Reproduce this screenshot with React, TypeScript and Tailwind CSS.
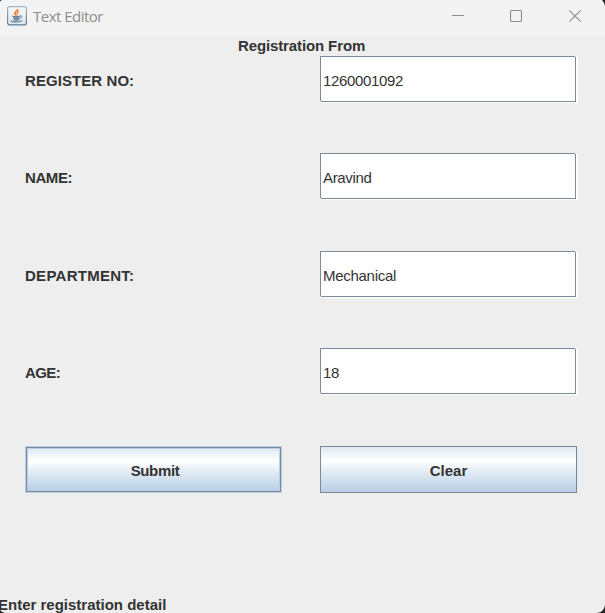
import React from "react";

type Field = { label: string; value: string; labelClass: string; valueClass: string };

const fields: Field[] = [
  { label: "REGISTER NO:", value: "1260001092", labelClass: "tracking-[0.07px]", valueClass: "pl-[2px] tracking-[-0.34px]" },
  { label: "NAME:", value: "Aravind", labelClass: "tracking-[-0.4px]", valueClass: "pl-[2px] tracking-[-0.34px]" },
  { label: "DEPARTMENT:", value: "Mechanical", labelClass: "tracking-[0.27px]", valueClass: "pl-[2px] tracking-[-0.28px]" },
  { label: "AGE:", value: "18", labelClass: "tracking-[-0.6px]", valueClass: "pl-[2px] tracking-[-0.34px]" },
];

function JavaIcon() {
  return (
    <svg width="20" height="20" viewBox="0 0 20 20" fill="none">
      <defs>
        <linearGradient id="frame" x1="0" y1="0" x2="0" y2="1">
          <stop offset="0" stopColor="#a3b4c2" />
          <stop offset="1" stopColor="#587a98" />
        </linearGradient>
        <linearGradient id="face" x1="0" y1="0" x2="0" y2="1">
          <stop offset="0" stopColor="#fafafa" />
          <stop offset="1" stopColor="#e0e4e8" />
        </linearGradient>
      </defs>
      <rect x="0.6" y="0.6" width="18.8" height="18.2" rx="2" fill="url(#face)" stroke="url(#frame)" strokeWidth="1.2" />
      <path d="M10.6 3c.6 1.7-3.4 3-2.8 4.6.3.8 1.2 1.3 1.3 2" stroke="#ec8136" strokeWidth="1.7" />
      <path d="M12.2 5.4c-1.7.5-2.7 1.5-1.9 2.4.4.6.2 1.2-.2 1.7" stroke="#ef9450" strokeWidth="1.3" />
      <path d="M5.2 10c1.2.9 7 .9 8.2 0M6 11.7c1.5.8 5.5.8 6.9 0M6.7 13.4c1.1.7 4.3.7 5.4 0" stroke="#6483a0" strokeWidth="1.4" />
      <path d="M13.2 9.8c2.3-.4 2.4 2.1-.3 2.6" stroke="#7690a9" strokeWidth="1" />
      <path d="M3.8 14.6c1 1.6 9.7 1.7 11.4-.2" stroke="#6483a0" strokeWidth="1.3" />
    </svg>
  );
}

function TitleBar() {
  return (
    <header className="flex h-[35px] items-start bg-[#f3f3f3]">
      <div className="ml-[7px] mt-[6px] shrink-0">
        <JavaIcon />
      </div>
      <span className="ml-[6px] mt-[6px] flex-1 font-['Open_Sans','Noto_Sans',sans-serif] text-[15px] leading-5 tracking-[-0.52px] text-[#8d8d8d]">
        Text Editor
      </span>
      <svg className="shrink-0" width="160" height="35" viewBox="0 0 160 35" fill="none" stroke="#8c8c8c">
        <path d="M7 15.5h12" />
        <rect x="65.5" y="10.5" width="11" height="11" rx="1" strokeWidth="1.1" />
        <path d="M124.3 10.3l11.4 11.4M135.7 10.3l-11.4 11.4" strokeWidth="1.1" />
      </svg>
    </header>
  );
}

/* Metal-style text box: the right and bottom edges stop short of the corners. */
function TextBox({ label, value, className }: { label: string; value: string; className: string }) {
  return (
    <div className="relative h-[46px] w-[256px] border border-[#7a8a99] bg-white shadow-[2px_1px_0_#fff]">
      <input
        aria-label={label}
        defaultValue={value}
        className={`block h-full w-full bg-transparent pt-[3px] outline-none ${className}`}
      />
      <span className="absolute -right-px -top-px size-px bg-[#eeeeee]" />
      <span className="absolute -bottom-px -left-px size-px bg-[#eeeeee]" />
    </div>
  );
}

export default function App() {
  return (
    <div className="relative flex h-[613px] w-[605px] flex-col overflow-hidden bg-[#eeeeee] font-['Liberation_Sans',Arial,sans-serif] text-[15px] text-[#333333]">
      <TitleBar />
      <h1 className="h-[21px] pl-[238px] pt-[1px] font-bold leading-5 tracking-[-0.12px]">Registration From</h1>
      <main className="grid grid-cols-[257px_257px] grid-rows-[97px_98px_97px_98px_47px] gap-x-[38px] pl-[25px]">
        {fields.map((f) => (
          <React.Fragment key={f.label}>
            <label className={`flex h-[47px] items-center pt-[4px] font-bold ${f.labelClass}`}>{f.label}</label>
            <TextBox label={f.label} value={f.value} className={f.valueClass} />
          </React.Fragment>
        ))}
        <button className="h-[47px] border border-[#b8cfe5] bg-[#b8cfe5]">
          <span className="flex h-full items-center justify-center border border-[#7a8a99] bg-[linear-gradient(#dfe9f2_0%,#ffffff_30%,#dde8f3_60%,#b8cfe5_100%)] pt-[3px] pl-[3px] font-bold tracking-[-0.35px] shadow-[inset_1px_1px_0_#b8cfe5,inset_-1px_0_0_#b8cfe5]">
            Submit
          </span>
        </button>
        <button className="h-[47px] border border-[#7a8a99] bg-[linear-gradient(#dfe9f2_0%,#ffffff_30%,#dde8f3_60%,#b8cfe5_100%)] pt-[4px] font-bold shadow-[1px_0_0_#e1e9f1]">
          Clear
        </button>
      </main>
      <footer className="mt-auto -ml-[2px] h-[18px] font-bold leading-5">Enter registration detail</footer>
      <svg className="pointer-events-none absolute inset-0" width="605" height="613" fill="#222222">
        <path d="M602 0h3v6q-1-4-3-6zM605 605v8h-8q7-1 8-8zM0 610q1 2 5 3H0zM0 0h1.5L0 1.5z" />
      </svg>
    </div>
  );
}
